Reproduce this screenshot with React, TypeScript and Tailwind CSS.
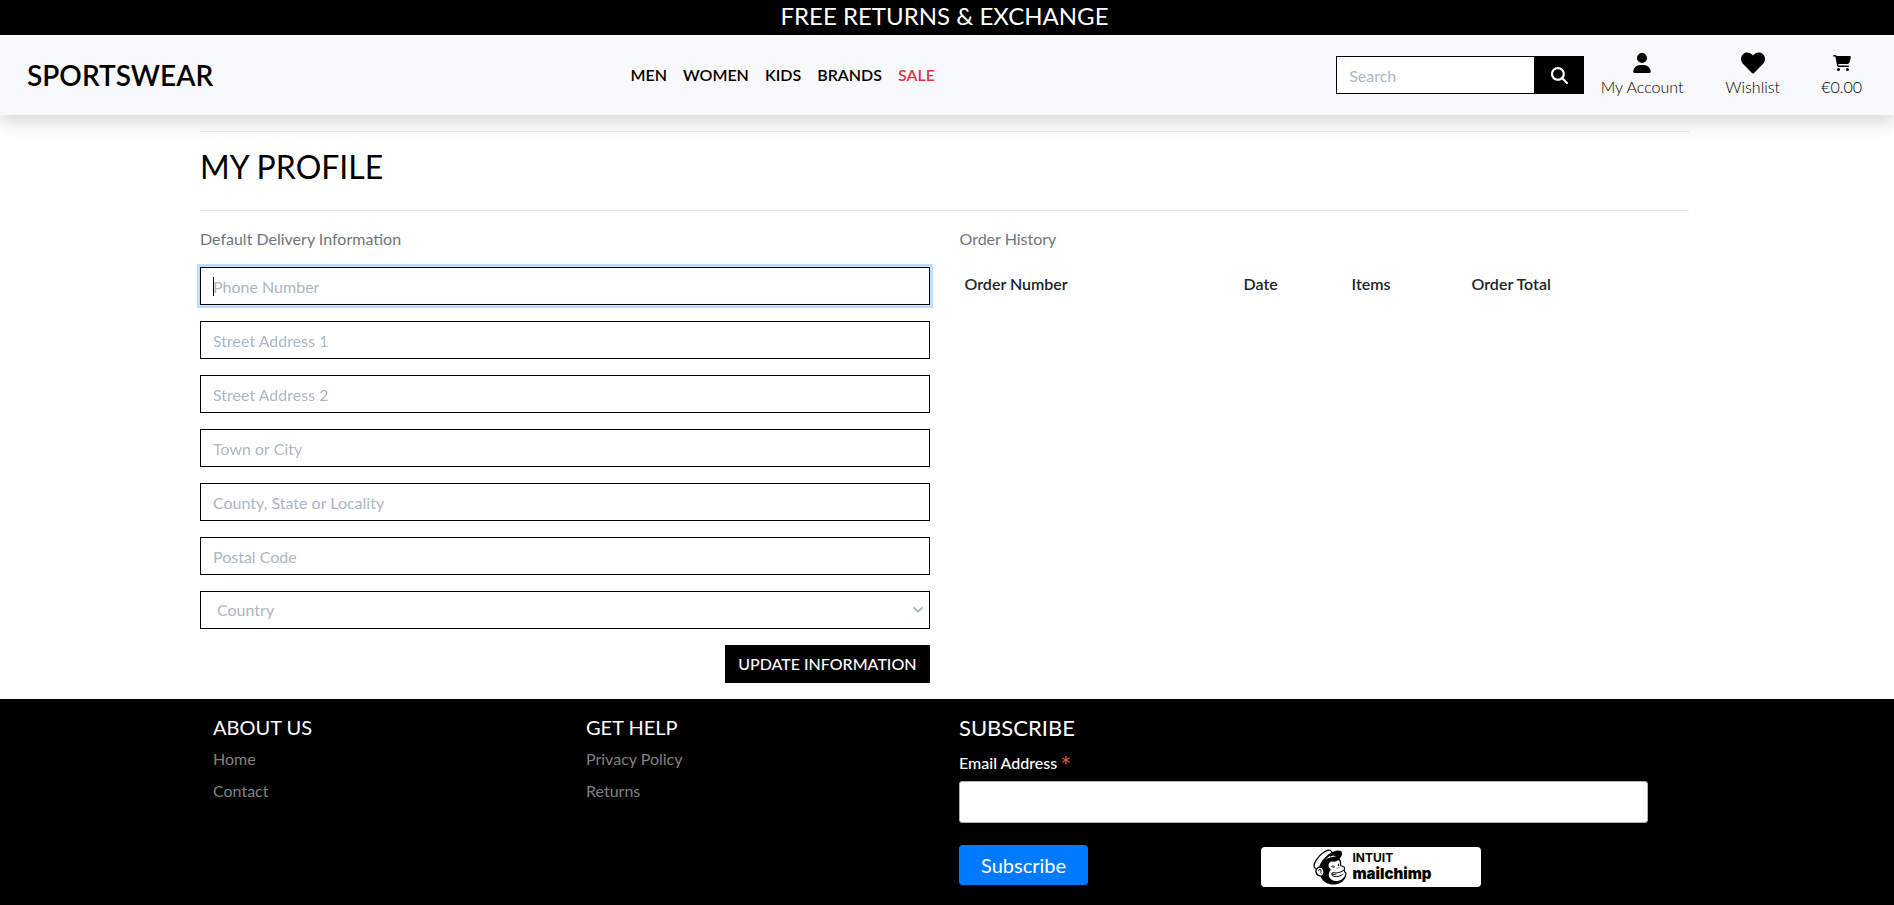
import { FaHeart, FaMailchimp } from "react-icons/fa";
import { FaCartShopping, FaMagnifyingGlass, FaUser } from "react-icons/fa6";

const navLinks = ["MEN", "WOMEN", "KIDS", "BRANDS"];

const fields = [
  { id: "phone", label: "Phone Number" },
  { id: "street1", label: "Street Address 1" },
  { id: "street2", label: "Street Address 2" },
  { id: "town", label: "Town or City" },
  { id: "county", label: "County, State or Locality" },
  { id: "postcode", label: "Postal Code" },
];

const footerColumns = [
  { title: "ABOUT US", links: ["Home", "Contact"] },
  { title: "GET HELP", links: ["Privacy Policy", "Returns"] },
];

function Header() {
  return (
    <header className="relative flex h-20 items-center bg-[#f8f9fa] pl-[27px] pr-8 shadow-[0_8px_16px_rgba(0,0,0,0.15)]">
      <a href="#" className="flex-[603] text-[28px] leading-8 font-semibold text-black">
        SPORTSWEAR
      </a>
      <nav className="flex flex-[705] gap-4 font-semibold text-black">
        {navLinks.map((name) => (
          <a key={name} href="#">
            {name}
          </a>
        ))}
        <a href="#" className="text-[#dc3545]">
          SALE
        </a>
      </nav>
      <form className="flex">
        <input
          type="search"
          aria-label="Search"
          placeholder="Search"
          className="h-[38px] w-[198px] border border-r-0 border-black bg-white px-3 text-base placeholder:text-[#aab7c4] outline-none"
        />
        <button type="button" aria-label="Submit search" className="flex h-[38px] w-[50px] items-center justify-center bg-black text-white">
          <FaMagnifyingGlass size={17} />
        </button>
      </form>
      <div className="ml-4 flex gap-10 font-light text-black">
        <a href="#" className="flex w-[84px] flex-col items-center">
          <span className="flex h-6 items-center">
            <FaUser size={20} />
          </span>
          My Account
        </a>
        <a href="#" className="flex w-[57px] flex-col items-center">
          <span className="flex h-6 items-center">
            <FaHeart size={24} />
          </span>
          Wishlist
        </a>
        <a href="#" className="flex flex-col items-center">
          <span className="flex h-6 items-center">
            <FaCartShopping size={18} />
          </span>
          €0.00
        </a>
      </div>
    </header>
  );
}

function DeliveryForm() {
  return (
    <section>
      <p className="mb-4 text-[#6c757d]">Default Delivery Information</p>
      <form className="flex flex-col gap-4">
        {fields.map((field, index) => (
          <div key={field.id} className="group relative">
            <input
              id={field.id}
              aria-label={field.label}
              placeholder={field.label}
              autoFocus={index === 0}
              className="block h-[38px] w-full border border-black bg-white px-3 text-base text-black outline-none placeholder:text-[#aab7c4] placeholder-shown:caret-transparent focus:ring-3 focus:ring-[#bfdeff]"
            />
            <span className="pointer-events-none absolute top-[10px] left-[13px] hidden h-[19px] w-px bg-black group-has-[input:focus:placeholder-shown]:block" />
          </div>
        ))}
        <div className="relative">
          <select
            aria-label="Country"
            defaultValue=""
            className="block h-[38px] w-full appearance-none border border-black bg-white px-4 text-base text-[#aab7c4] outline-none"
          >
            <option value="">Country</option>
            <option value="IE">Ireland</option>
          </select>
          <svg
            viewBox="0 0 12 8"
            className="pointer-events-none absolute top-[15px] right-[6px] h-2 w-3 fill-none stroke-[#aab7c4] stroke-2"
          >
            <path d="M1.5 1.5 6 5.5 10.5 1.5" />
          </svg>
        </div>
        <button type="button" className="h-[38px] self-end bg-black px-[13px] font-medium text-white">
          UPDATE INFORMATION
        </button>
      </form>
    </section>
  );
}

function OrderHistory() {
  return (
    <section>
      <p className="mb-4 text-[#6c757d]">Order History</p>
      <table className="w-full table-fixed text-left text-[#212529]">
        <thead>
          <tr>
            <th className="w-[279px] p-[5px] font-semibold">Order Number</th>
            <th className="w-[108px] p-[5px] font-semibold">Date</th>
            <th className="w-[120px] p-[5px] font-semibold">Items</th>
            <th className="p-[5px] font-semibold">Order Total</th>
          </tr>
        </thead>
        <tbody />
      </table>
    </section>
  );
}

function Footer() {
  return (
    <footer className="grid grow grid-cols-4 bg-black pr-[189px] pl-[213px] text-white">
      {footerColumns.map((column) => (
        <div key={column.title} className="pt-4">
          <h2 className="text-xl leading-6">{column.title}</h2>
          <ul className="pt-2 text-[#808080]">
            {column.links.map((name) => (
              <li key={name} className="pb-2">
                <a href="#">{name}</a>
              </li>
            ))}
          </ul>
        </div>
      ))}
      <form className="col-span-2 pt-4 pr-[57px]">
        <h2 className="text-[22px] leading-[26px]">SUBSCRIBE</h2>
        <label htmlFor="email" className="mt-[10px] flex h-6 gap-1 font-medium">
          Email Address <span className="font-['DejaVu_Sans',sans-serif] text-lg leading-6 text-[#e85c41]">*</span>
        </label>
        <input
          id="email"
          type="email"
          className="mt-[6px] block h-[42px] w-full rounded-[3px] border border-[#abb0b2] bg-white px-2 text-black outline-none"
        />
        <div className="mt-[22px] flex">
          <div className="w-[302px]">
            <button type="button" className="h-10 rounded bg-[#007bff] px-[22px] text-xl">
              Subscribe
            </button>
          </div>
          <a
            href="#"
            aria-label="Intuit Mailchimp"
            className="mt-[2px] flex h-10 w-[220px] items-center justify-center gap-[2px] rounded bg-white font-['Inter',sans-serif] text-black"
          >
            <FaMailchimp size={40} />
            <span className="flex flex-col">
              <span className="text-xs leading-[14px] font-bold">INTUIT</span>
              <span className="text-[15px] leading-[18px] font-black">mailchimp</span>
            </span>
          </a>
        </div>
      </form>
    </footer>
  );
}

export default function App() {
  return (
    <div className="flex min-h-screen flex-col bg-white font-['Lato',sans-serif] text-base">
      <p className="bg-black pr-[5px] pb-[3px] text-center text-2xl leading-8 text-white">FREE RETURNS &amp; EXCHANGE</p>
      <Header />
      <main className="pt-4 pr-[205px] pb-4 pl-[200px]">
        <h1 className="h-20 border-y border-black/10 pt-4 text-[32px] leading-[38px] text-black">MY PROFILE</h1>
        <div className="grid grid-cols-2 gap-[30px] pt-4">
          <DeliveryForm />
          <OrderHistory />
        </div>
      </main>
      <Footer />
    </div>
  );
}
